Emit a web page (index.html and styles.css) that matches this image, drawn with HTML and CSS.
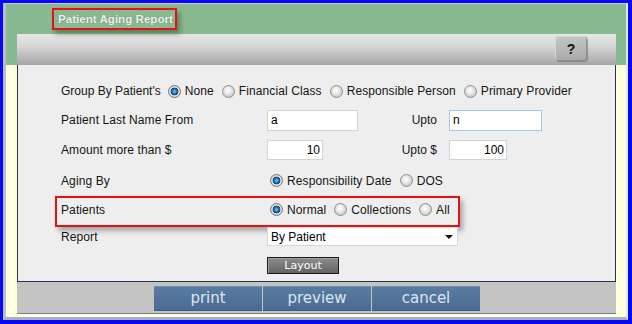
FILE: index.html
```html
<!DOCTYPE html>
<html>
<head>
<meta charset="utf-8">
<title>Patient Aging Report</title>
<link rel="stylesheet" href="styles.css">
</head>
<body>
<div class="window">
  <div class="frame">
    <header class="top">
      <div class="title-row"><span class="title">Patient Aging Report</span></div>
      <div class="toolbar"><button class="help" type="button">?</button></div>
    </header>
    <div class="body">
      <main class="panel">
        <div class="row r1">
          <span class="label auto">Group By Patient's</span>
          <label class="opt"><input type="radio" name="grp" checked><span>None</span></label>
          <label class="opt"><input type="radio" name="grp"><span>Financial Class</span></label>
          <label class="opt"><input type="radio" name="grp"><span>Responsible Person</span></label>
          <label class="opt"><input type="radio" name="grp"><span>Primary Provider</span></label>
        </div>
        <div class="row r2">
          <span class="label">Patient Last Name From</span>
          <div class="pair">
            <input class="field w91" type="text" value="a">
            <span>Upto</span>
          </div>
          <input class="field w93 focus" type="text" value="n">
        </div>
        <div class="row r3">
          <span class="label">Amount more than $</span>
          <div class="pair">
            <input class="field num w56" type="text" value="10">
            <span>Upto $</span>
          </div>
          <input class="field num w58" type="text" value="100">
        </div>
        <div class="row r4">
          <span class="label">Aging By</span>
          <label class="opt"><input type="radio" name="aging" checked><span>Responsibility Date</span></label>
          <label class="opt"><input type="radio" name="aging"><span>DOS</span></label>
        </div>
        <div class="row r5 highlighted">
          <span class="label">Patients</span>
          <label class="opt"><input type="radio" name="pat" checked><span>Normal</span></label>
          <label class="opt"><input type="radio" name="pat"><span>Collections</span></label>
          <label class="opt"><input type="radio" name="pat"><span>All</span></label>
        </div>
        <div class="row r6">
          <span class="label">Report</span>
          <div class="select-wrap">
            <select class="select"><option>By Patient</option></select>
          </div>
        </div>
        <div class="row r7">
          <button class="layout" type="button">Layout</button>
        </div>
      </main>
      <footer class="actions">
        <button class="btn" type="button">print</button>
        <button class="btn" type="button">preview</button>
        <button class="btn" type="button">cancel</button>
      </footer>
    </div>
  </div>
</div>
</body>
</html>
```

FILE: styles.css
```css
* { box-sizing: border-box; }
html, body { margin: 0; padding: 0; }
body {
  width: 632px;
  height: 324px;
  overflow: hidden;
  font-family: "Liberation Sans", Arial, sans-serif;
  font-size: 12px;
  color: #151515;
  background: #0000ff;
}
.window {
  height: 324px;
  border-style: solid;
  border-color: #0808f6;
  border-width: 3px 4px 4px 3px;
}
.frame {
  height: 100%;
  border-style: solid;
  border-width: 1px 2px 3px 3px;
  border-color: #c9ced8 #e4e6ec #a9b0bc #b7bfcc;
  background: #ffffe0;
  display: flex;
  flex-direction: column;
}
.top {
  background: #89b990;
  padding: 0 10px 0 11px;
}
.title-row {
  height: 30px;
  padding: 4px 0 0 35px;
}
.title {
  display: inline-block;
  width: 125px;
  height: 22px;
  line-height: 18px;
  padding: 0 0 0 4px;
  border: 2px solid #e41212;
  font-weight: bold;
  font-size: 11.6px;
  color: #eef2ee;
  text-shadow: 0 0 1px #5d6e5e;
  box-shadow: 3px 4px 5px rgba(40, 60, 40, 0.45);
  white-space: nowrap;
}
.toolbar {
  height: 31px;
  background: linear-gradient(#e7e7e7, #d6d6d6 40%, #a5a5a5);
  display: flex;
  justify-content: flex-end;
  align-items: flex-start;
  padding: 2px 29px 0 0;
}
.help {
  width: 32px;
  height: 25px;
  border: 0;
  border-radius: 4px;
  padding: 0;
  background: linear-gradient(#c6c6c6, #a9a9a9);
  box-shadow: inset -1px -1px 0 #8c8c8c, inset 1px 1px 0 #d6d6d6, 1px 1px 1px rgba(0, 0, 0, 0.25);
  font: bold 14px "Liberation Sans", Arial, sans-serif;
  color: #111;
}
.body {
  flex: 1;
  padding: 0 10px 3px 11px;
  display: flex;
  flex-direction: column;
}
.panel {
  height: 217px;
  flex: none;
  background: #eeeeee;
  border: 1px solid #243452;
  border-top: 0;
  padding: 12px 0 0 43px;
}
.row {
  display: flex;
  align-items: center;
  white-space: nowrap;
}
.r1 { height: 28px; }
.r2 { height: 30px; }
.r3 { height: 30px; }
.r4 { height: 31px; }
.r5 { height: 27px; }
.r6 { height: 27px; }
.r7 { height: 31px; padding-left: 206px; }
.label { width: 206px; flex: none; letter-spacing: 0.1px; }
.label.auto { width: auto; margin-right: 4px; letter-spacing: 0; }
.opt {
  display: inline-flex;
  align-items: center;
  gap: 4px;
  margin: 0 5px 0 3px;
  letter-spacing: 0.1px;
}
.opt input {
  appearance: none;
  -webkit-appearance: none;
  width: 13px;
  height: 13px;
  margin: 0;
  border-radius: 50%;
  border: 1px solid #8f8f8f;
  background: radial-gradient(circle at 45% 40%, #ffffff 0, #ececec 3px, #cfcfcf 6px);
}
.opt input:checked {
  border-color: #6f7680;
  background: radial-gradient(circle at 50% 50%, #7fc6ee 0, #2a7fc0 2px, #123f6c 3.6px, #e6e6e6 4.2px, #cfcfcf 6px);
}
.pair {
  width: 170px;
  flex: none;
  display: flex;
  justify-content: space-between;
  align-items: center;
  margin-right: 12px;
}
.field {
  height: 21px;
  border: 1px solid #d3d3d3;
  background: #fff;
  font: 12px "Liberation Sans", Arial, sans-serif;
  color: #000;
  padding: 0 3px;
  outline: none;
}
.r3 .field { height: 20px; }
.field.num { text-align: right; padding-right: 2px; }
.field.focus { border-color: #a6c6e0; }
.w91 { width: 91px; }
.w93 { width: 93px; }
.w56 { width: 56px; }
.w58 { width: 58px; }
.select-wrap {
  position: relative;
  width: 191px;
  height: 19px;
}
.select {
  appearance: none;
  -webkit-appearance: none;
  width: 100%;
  height: 100%;
  border: 1px solid #d6d6d6;
  border-radius: 0;
  background: #fff;
  font: 12px "Liberation Sans", Arial, sans-serif;
  color: #000;
  padding: 0 0 0 3px;
  outline: none;
}
.select-wrap::after {
  content: "";
  position: absolute;
  right: 5px;
  top: 8px;
  border-left: 4px solid transparent;
  border-right: 4px solid transparent;
  border-top: 4px solid #111;
  pointer-events: none;
}
.highlighted { position: relative; }
.highlighted::after {
  content: "";
  position: absolute;
  left: -6px;
  top: 0;
  width: 401px;
  height: 27px;
  border: 2px solid #e41212;
  box-shadow: 3px 4px 5px rgba(0, 0, 0, 0.3);
  pointer-events: none;
}
.layout {
  width: 72px;
  height: 17px;
  border: 1px solid #1b1b1b;
  padding: 0;
  background: linear-gradient(#8c8c8c, #646464);
  box-shadow: inset 1px 1px 0 #a0a0a0;
  color: #fff;
  font: 11px "DejaVu Sans", Verdana, sans-serif;
  line-height: 15px;
}
.actions {
  height: 32px;
  flex: none;
  background: #c4c4c4;
  border-bottom: 1px solid #6f8098;
  padding: 4px 0 0 137px;
  display: flex;
  gap: 1px;
}
.btn {
  width: 108px;
  height: 25px;
  border: 0;
  padding: 0;
  background: linear-gradient(#5b7ca2, #4a6b91);
  box-shadow: inset 0 1px 0 #6f8eb1, inset 0 -1px 0 #3e5b7d;
  color: #dbe6f1;
  font: 15px "DejaVu Sans", Verdana, sans-serif;
  line-height: 25px;
}
```
